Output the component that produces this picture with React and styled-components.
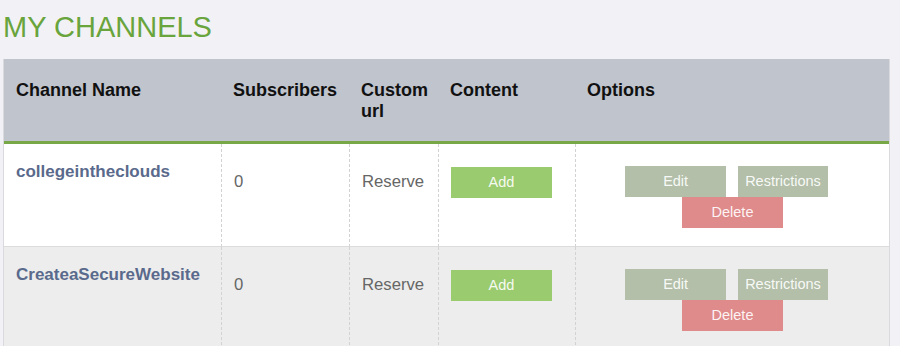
import React from 'react';
import styled, { createGlobalStyle } from 'styled-components';

const GlobalStyle = createGlobalStyle`
    * { box-sizing: border-box; }
    body {
        margin: 0;
        background: #f2f2f6;
        font-family: "Liberation Sans", Arial, sans-serif;
    }
`;

// Button colours by kind
const BUTTON_COLORS = {
    add: '#9acb6e',
    edit: '#b3bfa9',
    delete: '#e08b8b'
};

const Page = styled.div`
    padding: 0 0 0 3px;
`;

const Title = styled.h1`
    margin: 11px 0 15px 0;
    font-size: 29px;
    font-weight: normal;
    color: #69a43c;
`;

const Table = styled.table`
    width: 887px;
    table-layout: fixed;
    border-collapse: separate;
    border-spacing: 0;
    border-left: 1px solid #d9d9de;
    border-right: 1px solid #d9d9de;
`;

const HeadCell = styled.th`
    width: ${p => p.$width}px;
    padding: 21px 12px 19px;
    background: #c0c4cc;
    border-bottom: 3px solid #77a746;
    text-align: left;
    vertical-align: top;
    font-size: 18px;
    line-height: 21px;
    font-weight: bold;
    color: #111;
`;

const Row = styled.tr`
    background: ${p => p.$shaded ? '#ededed' : '#ffffff'};
`;

const Cell = styled.td`
    padding: 22px 12px 18px;
    vertical-align: top;
    border-bottom: 1px solid #dcdcdc;
    border-left: ${p => p.$first ? 'none' : '1px dashed #d2d2d2'};
    font-size: 16.7px;
    line-height: 31px;
    color: #666;
`;

const ChannelName = styled.div`
    margin-top: -5px;
    font-size: 17px;
    line-height: 22px;
    font-weight: bold;
    color: #5a6a8c;
`;

const Options = styled.div`
    display: flex;
    flex-wrap: wrap;
    justify-content: center;
`;

const Button = styled.button`
    min-width: ${p => p.$fit ? 0 : 101}px;
    height: 31px;
    padding: 0 7px;
    margin-right: ${p => p.$gap ? 12 : 0}px;
    border: none;
    border-radius: 0;
    background: ${p => BUTTON_COLORS[p.$kind]};
    color: rgba(255, 255, 255, 0.92);
    font-family: inherit;
    font-size: 14.5px;
    line-height: 31px;
    cursor: pointer;
`;

const columns = [
    { label: 'Channel Name', width: 217 },
    { label: 'Subscribers', width: 128 },
    { label: 'Custom url', width: 89 },
    { label: 'Content', width: 137 },
    { label: 'Options', width: 314 }
];

const channels = [
    { name: 'collegeintheclouds', subscribers: 0 },
    { name: 'CreateaSecureWebsite', subscribers: 0 }
];

function ChannelRow({ channel, shaded }) {
    return (
        <Row $shaded={shaded}>
            <Cell $first>
                <ChannelName>{channel.name}</ChannelName>
            </Cell>
            <Cell>{channel.subscribers}</Cell>
            <Cell>Reserve</Cell>
            <Cell>
                <Button $kind="add">Add</Button>
            </Cell>
            <Cell>
                <Options>
                    <Button $kind="edit" $gap>Edit</Button>
                    <Button $kind="edit" $gap $fit>Restrictions</Button>
                    <Button $kind="delete">Delete</Button>
                </Options>
            </Cell>
        </Row>
    );
}

export default function App() {
    return (
        <Page>
            <GlobalStyle />
            <Title>MY CHANNELS</Title>
            <Table>
                <thead>
                    <tr>
                        {columns.map(col =>
                            <HeadCell key={col.label} $width={col.width}>{col.label}</HeadCell>
                        )}
                    </tr>
                </thead>
                <tbody>
                    {channels.map((channel, i) =>
                        <ChannelRow key={channel.name} channel={channel} shaded={i % 2 === 1} />
                    )}
                </tbody>
            </Table>
        </Page>
    );
}
